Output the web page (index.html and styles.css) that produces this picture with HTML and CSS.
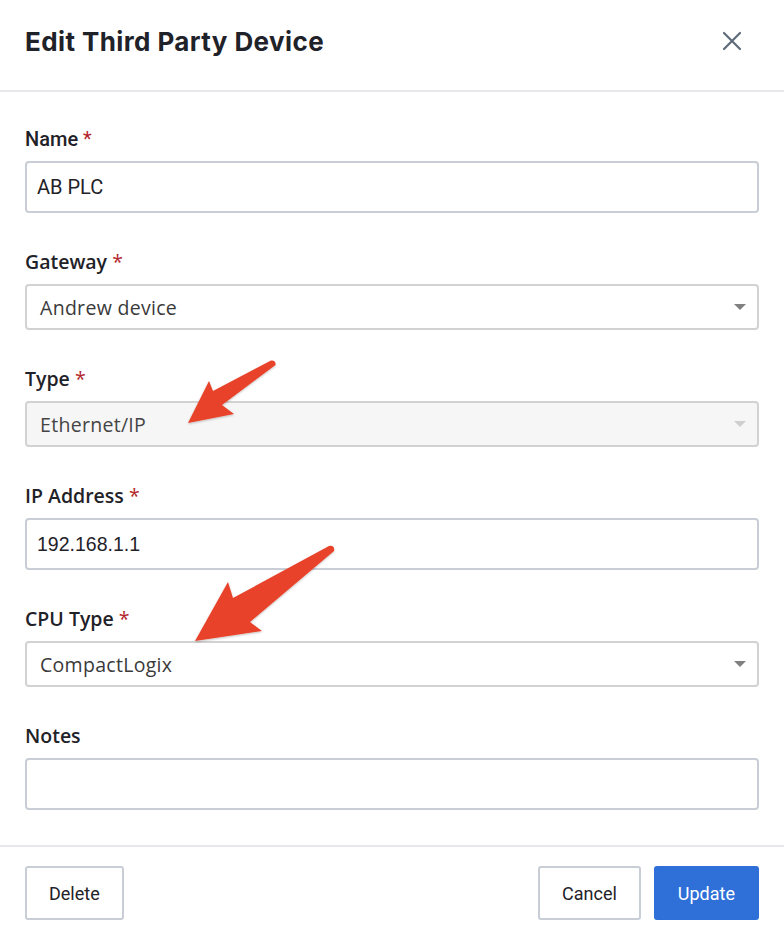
FILE: index.html
```html
<!DOCTYPE html>
<html lang="en">
<head>
  <meta charset="UTF-8" />
  <title>Edit Third Party Device</title>
  <link rel="stylesheet" href="styles.css">
</head>
<body>
  <div class="modal">
    <div class="modal-header">
      <h1 class="modal-title">Edit Third Party Device</h1>
      <button class="close-btn" aria-label="Close">
        <svg width="20" height="20" viewBox="0 0 20 20">
          <path d="M2 2 L18 18 M18 2 L2 18" stroke="#5f6b7a" stroke-width="2.2" stroke-linecap="round" />
        </svg>
      </button>
    </div>

    <form class="modal-body">
      <div class="field">
        <label class="label condensed">Name <span class="req">*</span></label>
        <div class="input condensed">AB PLC</div>
      </div>

      <div class="field">
        <label class="label">Gateway <span class="req">*</span></label>
        <div class="select">
          <span>Andrew device</span>
          <span class="caret"></span>
        </div>
      </div>

      <div class="field">
        <label class="label">Type <span class="req">*</span></label>
        <div class="select disabled">
          <span>Ethernet/IP</span>
          <span class="caret"></span>
        </div>
      </div>

      <div class="field">
        <label class="label">IP Address <span class="req">*</span></label>
        <div class="input plain">192.168.1.1</div>
      </div>

      <div class="field">
        <label class="label">CPU Type <span class="req">*</span></label>
        <div class="select">
          <span>CompactLogix</span>
          <span class="caret"></span>
        </div>
      </div>

      <div class="field last">
        <label class="label">Notes</label>
        <div class="input"></div>
      </div>
    </form>

    <div class="modal-footer">
      <button class="btn">Delete</button>
      <div class="footer-right">
        <button class="btn">Cancel</button>
        <button class="btn primary">Update</button>
      </div>
    </div>

    <!-- annotation arrows -->
    <svg class="arrows" width="784" height="938" viewBox="0 0 784 938">
      <defs>
        <filter id="shadow" x="-20%" y="-20%" width="140%" height="140%">
          <feDropShadow dx="0" dy="1" stdDeviation="1" flood-color="#000" flood-opacity="0.25" />
        </filter>
      </defs>
      <g fill="#e8432a" filter="url(#shadow)">
        <path d="M271 360.5 Q276 360 275.5 365 L222 405 L234 414 L188 423 L209 381 L213 391 Z" />
        <path d="M329 546 Q335 545 334 551 L250 622 L262 631 L195 641 L228 582 L233 598 Z" />
      </g>
    </svg>
  </div>
</body>
</html>
```

FILE: styles.css
```css
body {
  margin: 0;
  background: #fff;
  color: #1f2228;
  font-family: "Open Sans", Arial, sans-serif;
}

.modal {
  position: relative;
  width: 784px;
  height: 938px;
  background: #fff;
}

.modal-header {
  height: 92px;
  display: flex;
  align-items: center;
  justify-content: space-between;
  padding: 0 25px;
  border-bottom: 2px solid #e6e8ec;
  box-sizing: border-box;
}

.modal-title {
  margin: -8px 0 0;
  font-family: Inter, sans-serif;
  font-weight: 700;
  font-size: 26px;
  letter-spacing: 0.4px;
  color: #1f2228;
}

.close-btn {
  border: none;
  background: none;
  padding: 0;
  margin-right: 17px;
  margin-top: -8px;
  width: 20px;
  height: 20px;
  cursor: pointer;
}

.modal-body {
  padding: 36px 25px 35px;
  border-bottom: 2px solid #e6e8ec;
}

.field {
  margin-bottom: 38px;
}

.field.last {
  margin-bottom: 0;
}

.label {
  display: block;
  height: 22px;
  line-height: 22px;
  margin-bottom: 11px;
  font-family: "Open Sans", sans-serif;
  font-weight: 600;
  font-size: 19.5px;
  color: #1f2228;
}

.label.condensed {
  font-family: Roboto, sans-serif;
  font-weight: 500;
  font-size: 20px;
}

.req {
  color: #b3262b;
  font-weight: 400;
}

.input {
  height: 52px;
  border: 2px solid #c9ced6;
  border-radius: 4px;
  box-sizing: border-box;
  padding: 0 10px;
  display: flex;
  align-items: center;
  font-family: Roboto, sans-serif;
  font-size: 20px;
  color: #1f2228;
}

.input.plain {
  font-family: "Liberation Sans", Arial, sans-serif;
  font-size: 19.5px;
}

.select {
  height: 46px;
  border: 2px solid #d2d2d2;
  border-radius: 4px;
  box-sizing: border-box;
  padding: 0 11px 0 13px;
  display: flex;
  align-items: center;
  justify-content: space-between;
  font-family: "Open Sans", sans-serif;
  font-size: 19.5px;
  letter-spacing: 0.3px;
  color: #3a3a3a;
  background: #fff;
}

.select.disabled {
  background: #f6f6f6;
  color: #444;
}

.caret {
  width: 0;
  height: 0;
  border-left: 6.5px solid transparent;
  border-right: 6.5px solid transparent;
  border-top: 6.5px solid #808080;
}

.select.disabled .caret {
  border-top-color: #cfcfcf;
}

.modal-footer {
  display: flex;
  justify-content: space-between;
  padding: 19px 25px 0;
}

.footer-right {
  display: flex;
  gap: 13px;
}

.btn {
  height: 54px;
  padding: 0 22px;
  border: 2px solid #c9ced6;
  border-radius: 3px;
  background: #fff;
  color: #1f2228;
  font-family: Roboto, sans-serif;
  font-size: 18px;
  cursor: pointer;
}

.btn.primary {
  background: #2e6fd8;
  border-color: #2e6fd8;
  color: #fff;
}

.arrows {
  position: absolute;
  left: 0;
  top: 0;
  pointer-events: none;
}
```
